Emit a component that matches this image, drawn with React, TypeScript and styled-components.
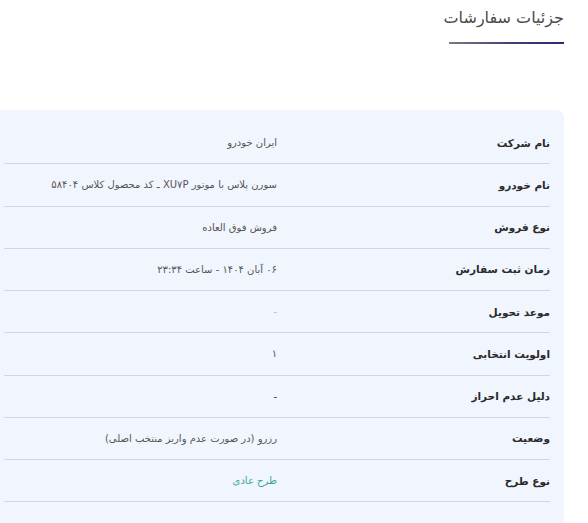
import React from "react";
import styled, { createGlobalStyle } from "styled-components";

const Global = createGlobalStyle`
  html, body { margin: 0; padding: 0; background: #ffffff; }
  body { font-family: "DejaVu Sans", "Noto Sans", sans-serif; overflow: hidden; }
`;

const Page = styled.div`
  direction: rtl;
  padding: 0 24px 0 0;
  width: 588px;
  box-sizing: border-box;
`;

const Header = styled.header`
  display: flex;
  flex-direction: column;
  align-items: flex-start;
  padding: 5px 0 0 0;
  height: 110px;
  box-sizing: border-box;
`;

const Title = styled.h1`
  margin: 0;
  font-size: 16px;
  line-height: 26px;
  font-weight: 400;
  color: #4a4a4a;
`;

const TitleBar = styled.div`
  margin-top: 11px;
  width: 115px;
  height: 2px;
  background: linear-gradient(to left, #2a2c6e, #3d3f78 45%, #7a7a80);
`;

const Card = styled.section`
  background: #f1f5fd;
  border-top-right-radius: 8px;
  padding: 12px 14px 0 4px;
`;

const Row = styled.div`
  display: grid;
  grid-template-columns: 1fr 1fr;
  align-items: center;
  height: 42.25px;
  box-sizing: border-box;
  border-bottom: 1px solid #d3d6dd;
`;

const Label = styled.div`
  font-size: 10.5px;
  font-weight: 700;
  color: #2a2a2a;
  text-align: right;
`;

const Value = styled.div<{ $tone?: "normal" | "muted" | "green" | "dark" }>`
  font-size: 10px;
  text-align: right;
  color: ${(p) =>
    p.$tone === "muted"
      ? "#b8bcc4"
      : p.$tone === "green"
      ? "#3aa596"
      : p.$tone === "dark"
      ? "#333"
      : "#555"};
`;

const rows: { label: string; value: string; tone?: "normal" | "muted" | "green" | "dark" }[] = [
  { label: "نام شرکت", value: "ایران خودرو" },
  { label: "نام خودرو", value: "سورن پلاس با موتور XU۷P ـ کد محصول کلاس ۵۸۴۰۴" },
  { label: "نوع فروش", value: "فروش فوق العاده" },
  { label: "زمان ثبت سفارش", value: "۰۶ آبان ۱۴۰۴ - ساعت ۲۳:۳۴" },
  { label: "موعد تحویل", value: "-", tone: "muted" },
  { label: "اولویت انتخابی", value: "۱" },
  { label: "دلیل عدم احراز", value: "-", tone: "dark" },
  { label: "وضعیت", value: "رزرو (در صورت عدم واریز منتخب اصلی)" },
  { label: "نوع طرح", value: "طرح عادی", tone: "green" },
  { label: "", value: "-", tone: "dark" },
];

export default function App() {
  return (
    <Page>
      <Global />
      <Header>
        <Title>جزئیات سفارشات</Title>
        <TitleBar />
      </Header>
      <Card>
        {rows.map((r, i) => (
          <Row key={i}>
            <Label>{r.label}</Label>
            <Value $tone={r.tone}>{r.value}</Value>
          </Row>
        ))}
      </Card>
    </Page>
  );
}
